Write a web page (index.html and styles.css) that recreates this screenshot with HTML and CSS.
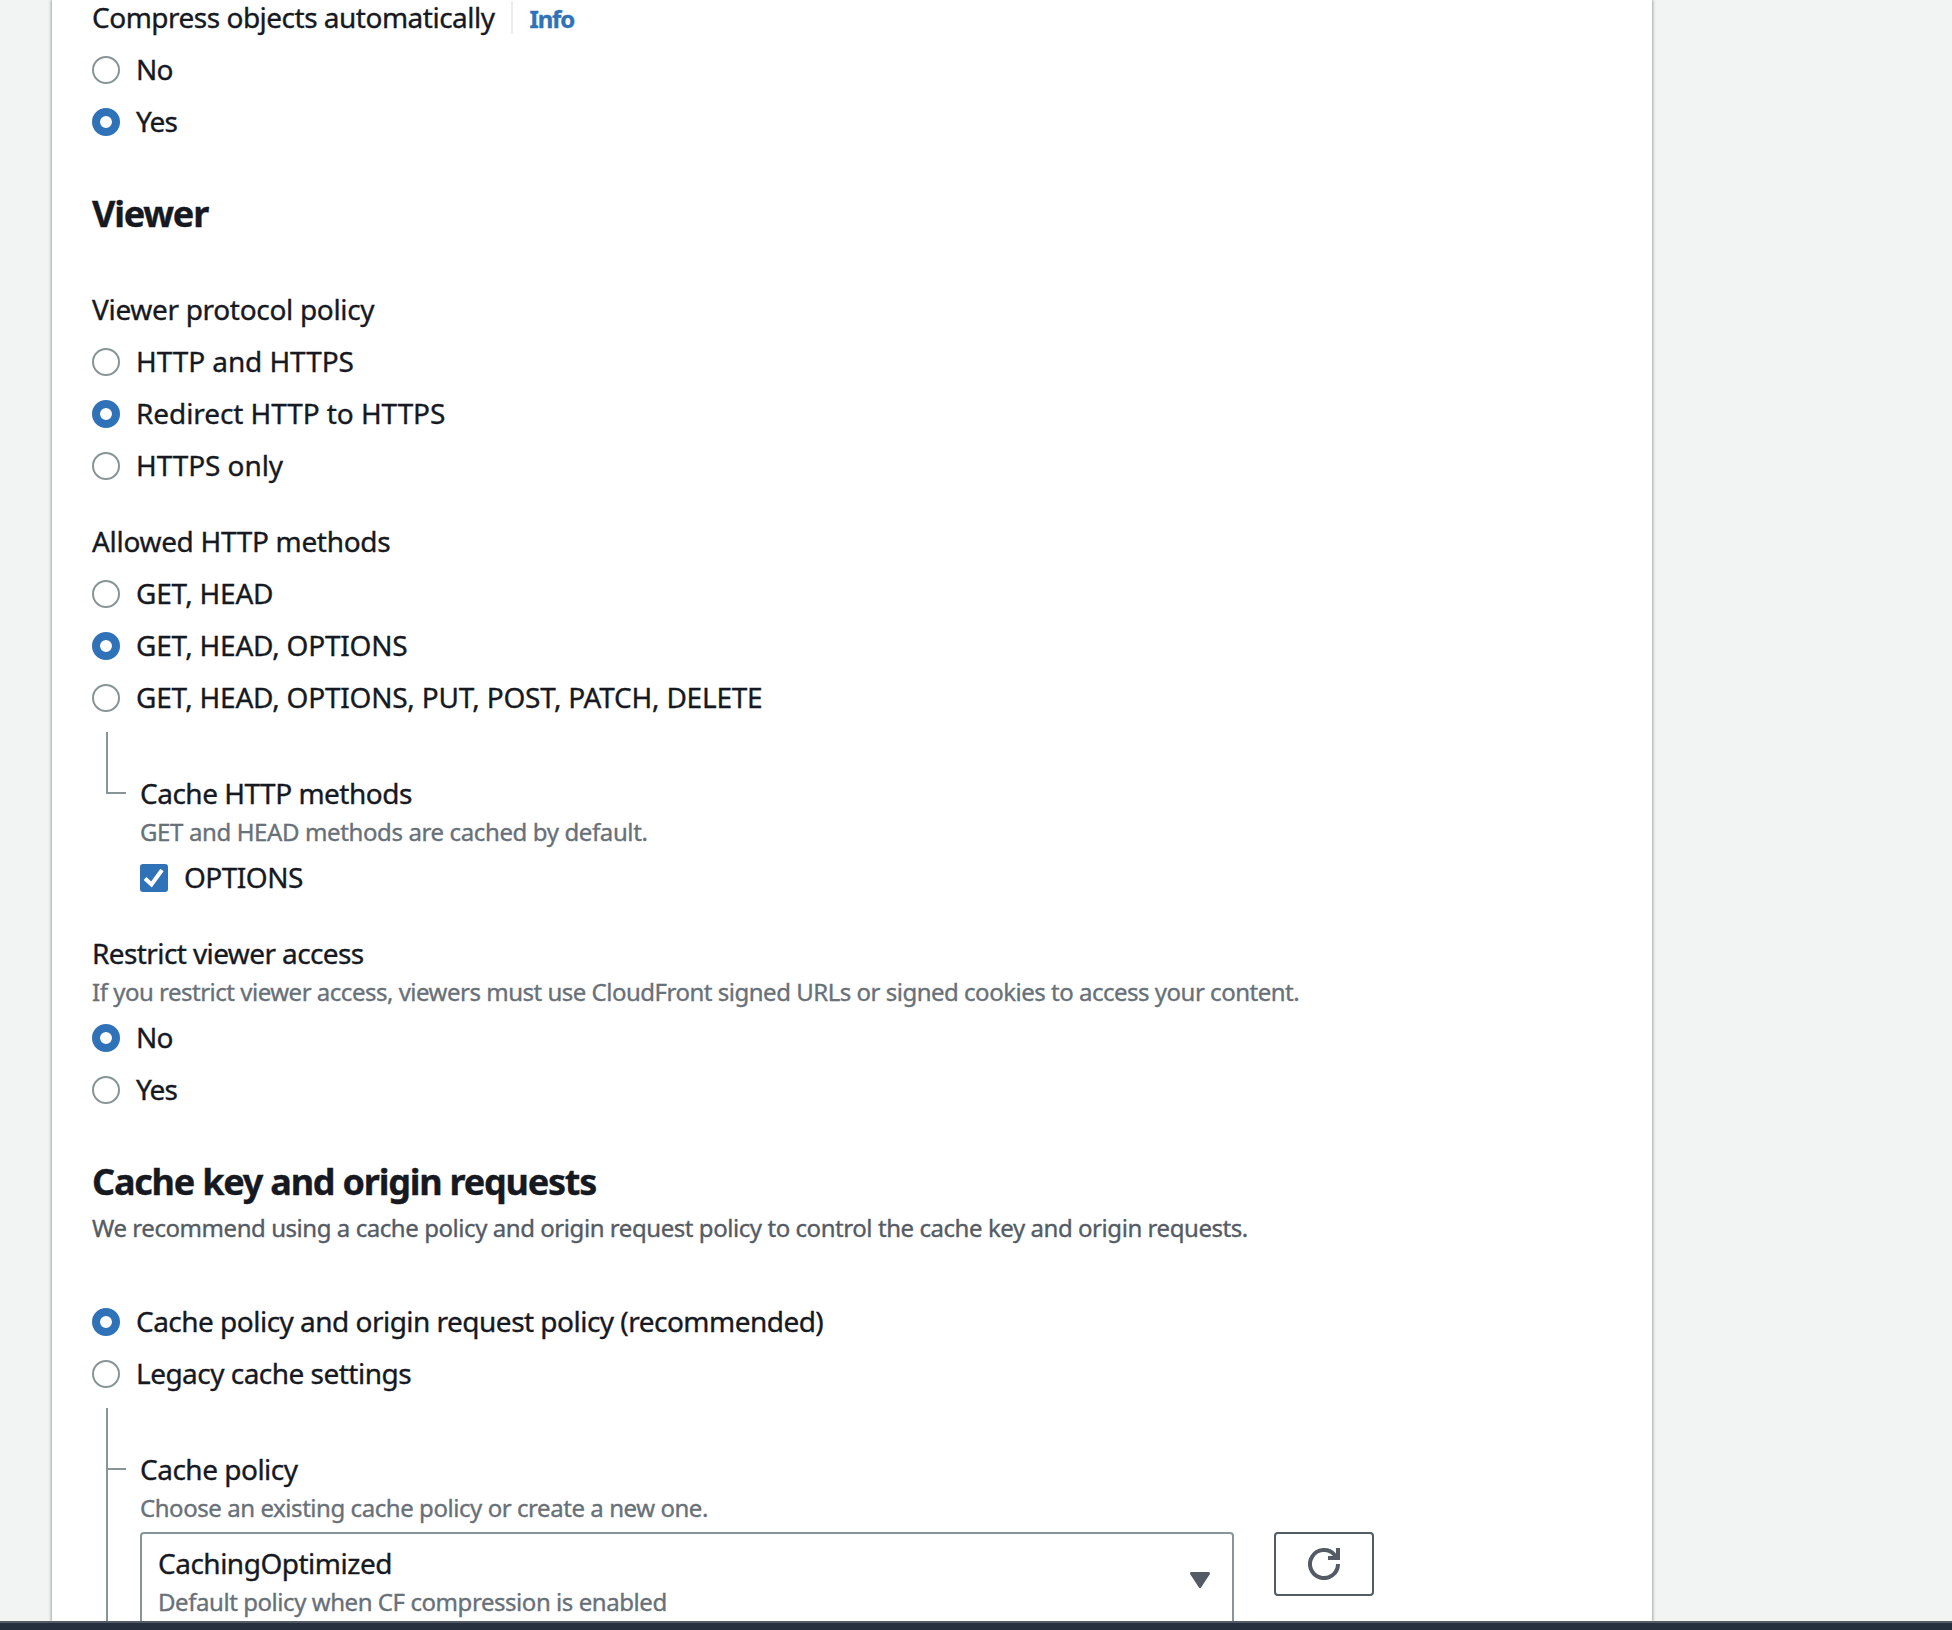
FILE: index.html
```
<!DOCTYPE html>
<html lang="en">
<head>
    <meta charset="UTF-8">
    <meta name="viewport" content="width=device-width, initial-scale=1.0">
    <title>Create distribution</title>
    <link rel="stylesheet" href="styles.css">
</head>
<body>

    <main class="panel">

        <div class="field">
            <div class="label-row">
                <span class="label">Compress objects automatically</span>
                <a class="info">Info</a>
            </div>
            <div class="options">
                <label class="option"><span class="radio"></span><span class="text short">No</span></label>
                <label class="option"><span class="radio checked"></span><span class="text short">Yes</span></label>
            </div>
        </div>

        <h2 class="heading">Viewer</h2>

        <div class="field">
            <div class="label protocol">Viewer protocol policy</div>
            <div class="options">
                <label class="option"><span class="radio"></span><span class="text http">HTTP and HTTPS</span></label>
                <label class="option"><span class="radio checked"></span><span class="text http">Redirect HTTP to HTTPS</span></label>
                <label class="option"><span class="radio"></span><span class="text http">HTTPS only</span></label>
            </div>
        </div>

        <div class="field">
            <div class="label protocol">Allowed HTTP methods</div>
            <div class="options">
                <label class="option"><span class="radio"></span><span class="text caps">GET, HEAD</span></label>
                <label class="option"><span class="radio checked"></span><span class="text caps">GET, HEAD, OPTIONS</span></label>
                <label class="option"><span class="radio"></span><span class="text caps">GET, HEAD, OPTIONS, PUT, POST, PATCH, DELETE</span></label>
            </div>
            <div class="tree">
                <div class="rail last"></div>
                <div class="branch">
                    <div class="label">Cache HTTP methods</div>
                    <p class="hint default-hint">GET and HEAD methods are cached by default.</p>
                    <label class="option">
                        <svg class="checkbox" viewBox="0 0 28 28">
                            <rect width="28" height="28" rx="3" fill="#3072b8"/>
                            <path d="M5 14.5l6.5 6L22 6" fill="none" stroke="#fff" stroke-width="4"/>
                        </svg>
                        <span class="text">OPTIONS</span>
                    </label>
                </div>
            </div>
        </div>

        <div class="field">
            <div class="label restrict">Restrict viewer access</div>
            <p class="hint restrict-hint">If you restrict viewer access, viewers must use CloudFront signed URLs or signed cookies to access your content.</p>
            <div class="options">
                <label class="option"><span class="radio checked"></span><span class="text short">No</span></label>
                <label class="option"><span class="radio"></span><span class="text short">Yes</span></label>
            </div>
        </div>

        <h2 class="heading">Cache key and origin requests</h2>
        <p class="description">We recommend using a cache policy and origin request policy to control the cache key and origin requests.</p>

        <div class="field">
            <div class="options">
                <label class="option"><span class="radio checked"></span><span class="text">Cache policy and origin request policy (recommended)</span></label>
                <label class="option"><span class="radio"></span><span class="text">Legacy cache settings</span></label>
            </div>
            <div class="tree">
                <div class="rail"></div>
                <div class="branch">
                    <div class="label">Cache policy</div>
                    <p class="hint">Choose an existing cache policy or create a new one.</p>
                    <div class="select-row">
                        <div class="select">
                            <div>
                                <div class="label">CachingOptimized</div>
                                <p class="hint">Default policy when CF compression is enabled</p>
                            </div>
                            <svg class="caret" viewBox="0 0 20 16">
                                <path d="M1.5 1.5h17L10 14.5z" fill="#545b64" stroke="#545b64" stroke-width="3" stroke-linejoin="round"/>
                            </svg>
                        </div>
                        <button class="refresh" aria-label="Refresh">
                            <svg viewBox="0 0 32 32" fill="none" stroke="#545b64" stroke-width="4">
                                <path d="M30 16a14 14 0 1 1-3.5-9.2l3 3.2"/>
                                <path d="M20 10h10V0"/>
                            </svg>
                        </button>
                    </div>
                </div>
            </div>
        </div>

    </main>

    <footer class="footer"></footer>

</body>
</html>
```
FILE: styles.css
```
* {
    box-sizing: border-box;
}

body {
    margin: 0;
    height: 1630px;
    overflow: hidden;
    display: flex;
    flex-direction: column;
    background: #f2f3f3;
    color: #16191f;
    font-family: "Noto Sans", "Open Sans", sans-serif;
    font-size: 28px;
    letter-spacing: -0.5px;
    -webkit-text-stroke: 0.35px;
}

h2, p {
    margin: 0;
}

/* White container */
.panel {
    width: 1600px;
    height: 1621px;
    flex: none;
    margin-left: 52px;
    padding: 0 40px;
    background: #fff;
    overflow: hidden;
    box-shadow: 0 0 2px 0 rgba(0, 28, 36, 0.3), 2px 0 2px 0 rgba(0, 28, 36, 0.15), -2px 0 2px 0 rgba(0, 28, 36, 0.15);
}

.field + .field {
    margin-top: 41px;
}

.label {
    line-height: 40px;
    white-space: nowrap;
}

.label.protocol {
    letter-spacing: -0.32px;
}

.label.restrict {
    letter-spacing: -0.6px;
}

.label-row {
    display: flex;
    align-items: flex-start;
    height: 34px;
}

.label-row .label {
    line-height: 35px;
    letter-spacing: -0.5px;
}

.info {
    margin: 1px 0 0 16px;
    padding: 2px 0 0 17px;
    border-left: 2px solid #eaeded;
    color: #3072b8;
    font-size: 24px;
    font-weight: 700;
    line-height: 31px;
    letter-spacing: -1.2px;
}

.hint {
    margin-top: 1px;
    color: #687078;
    font-size: 24px;
    line-height: 36px;
    letter-spacing: -0.44px;
    white-space: nowrap;
}

.default-hint {
    letter-spacing: -0.38px;
}

.restrict-hint {
    letter-spacing: -0.49px;
}

.heading {
    margin: 56px 0 53px;
    font-size: 36px;
    font-weight: 700;
    line-height: 44px;
    letter-spacing: -1.22px;
}

.description {
    margin: -47px 0 62px;
    color: #545b64;
    font-size: 24px;
    line-height: 36px;
    letter-spacing: -0.44px;
}

/* Radios and checkbox */
.options {
    display: flex;
    flex-direction: column;
    gap: 24px;
}

.label + .options {
    margin-top: 19px;
}

.label-row + .options {
    margin-top: 22px;
}

.hint + .options,
.hint + .option {
    margin-top: 14px;
}

.option {
    display: flex;
    align-items: flex-start;
    gap: 16px;
    height: 28px;
}

.radio {
    width: 28px;
    height: 28px;
    border: 2px solid #879596;
    border-radius: 50%;
}

.radio.checked {
    border: 8px solid #3072b8;
}

.checkbox {
    width: 28px;
    height: 28px;
}

.text {
    line-height: 26px;
    letter-spacing: -0.52px;
    white-space: nowrap;
}

.text.short {
    letter-spacing: -0.9px;
}

.text.http {
    letter-spacing: -0.08px;
}

.text.caps {
    letter-spacing: -0.22px;
}

/* Nested settings */
.tree {
    display: flex;
    gap: 14px;
    margin-top: 20px;
    padding-left: 14px;
}

.rail {
    flex: none;
    width: 20px;
    border-left: 2px solid #879596;
}

.rail::before {
    content: "";
    display: block;
    height: 60px;
    border-bottom: 2px solid #879596;
}

.rail.last {
    height: 62px;
}

.branch {
    padding-top: 41px;
}

.select-row {
    display: flex;
    align-items: flex-start;
    gap: 40px;
    margin-top: 6px;
}

.select {
    display: flex;
    justify-content: space-between;
    width: 1094px;
    height: 102px;
    padding: 9px 22px 0 16px;
    border: 2px solid #879596;
    border-radius: 4px;
}

.caret {
    width: 20px;
    height: 16px;
    margin-top: 29px;
}

.refresh {
    display: flex;
    align-items: center;
    justify-content: center;
    width: 100px;
    height: 64px;
    padding: 0;
    border: 2px solid #545b64;
    border-radius: 4px;
    background: #fff;
}

.refresh svg {
    width: 32px;
    height: 32px;
}

.footer {
    position: relative;
    flex: none;
    height: 9px;
    border-top: 2px solid #545b64;
    background: #262f3d;
}
```
